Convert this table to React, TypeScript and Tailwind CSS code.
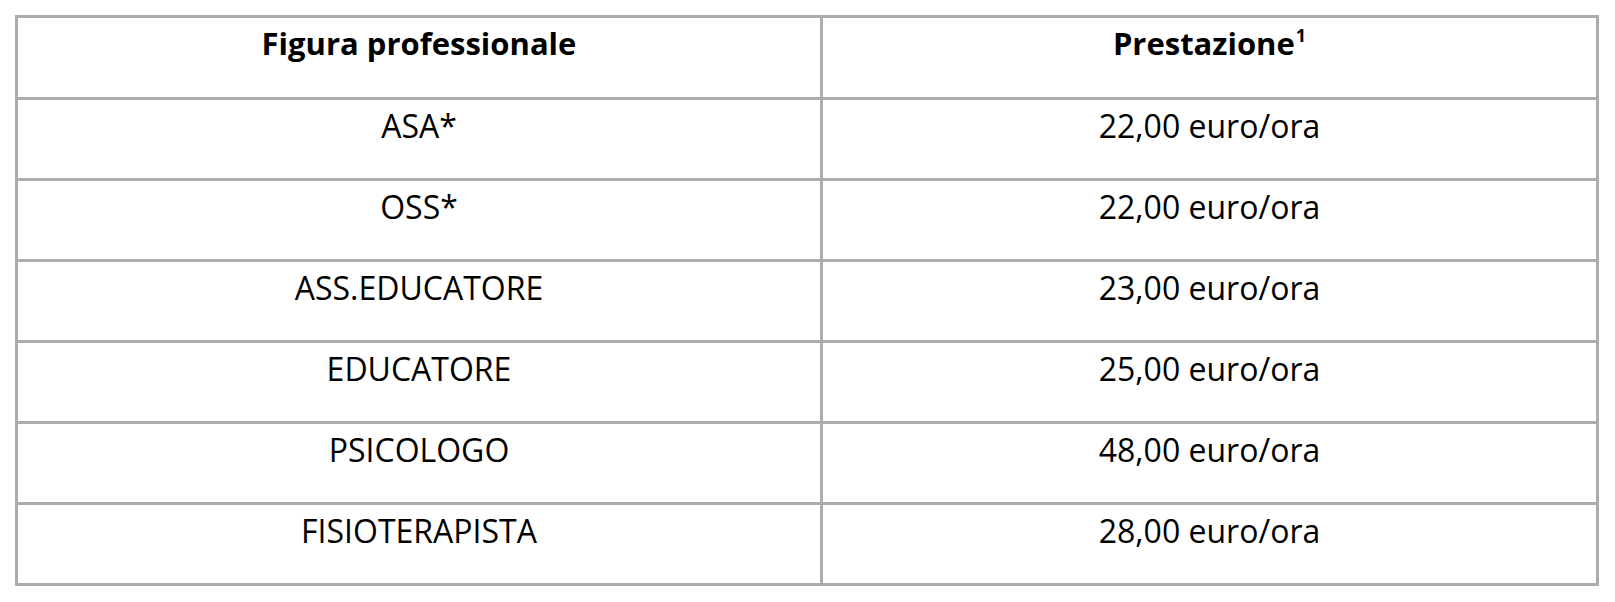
const rows = [
  ["ASA*", "22,00 euro/ora"],
  ["OSS*", "22,00 euro/ora"],
  ["ASS.EDUCATORE", "23,00 euro/ora"],
  ["EDUCATORE", "25,00 euro/ora"],
  ["PSICOLOGO", "48,00 euro/ora"],
  ["FISIOTERAPISTA", "28,00 euro/ora"],
];

export default function App() {
  return (
    <div className="w-[1615px] h-[602px] bg-white pt-[15px] pl-[15px] font-['Open_Sans',sans-serif] text-black">
      <table className="border-collapse table-fixed w-[1584px] border-[3px] border-[#acacac]">
        <colgroup>
          <col className="w-[805px]" />
          <col className="w-[776px]" />
        </colgroup>
        <thead>
          <tr className="h-[82px]">
            <th className="border-[3px] border-[#acacac] align-top pt-[4px] text-[31px] leading-[42px] font-bold">
              Figura professionale
            </th>
            <th className="border-[3px] border-[#acacac] align-top pt-[4px] text-[31px] leading-[42px] font-bold">
              Prestazione<sup className="text-[18px] leading-none align-[4px] ml-[1px]">1</sup>
            </th>
          </tr>
        </thead>
        <tbody>
          {rows.map(([role, price]) => (
            <tr key={role} className="h-[81px]">
              <td className="border-[3px] border-[#acacac] align-top pt-[4px] text-center text-[32px] leading-[44px]">
                {role}
              </td>
              <td className="border-[3px] border-[#acacac] align-top pt-[4px] text-center text-[32px] leading-[44px]">
                {price}
              </td>
            </tr>
          ))}
        </tbody>
      </table>
    </div>
  );
}
